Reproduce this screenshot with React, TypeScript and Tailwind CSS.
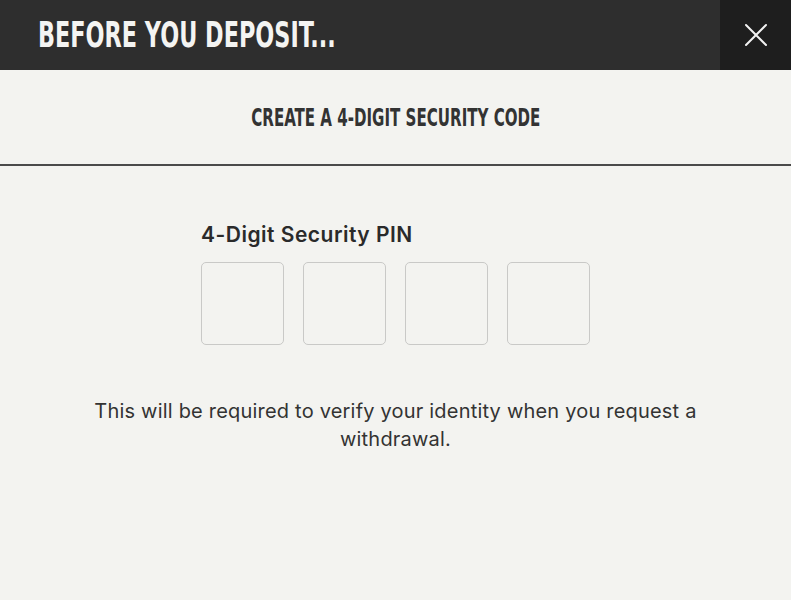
import React, { useState } from 'react'

const condensed = { fontFamily: '"DejaVu Sans Condensed", "Liberation Sans Narrow", "Roboto Condensed", sans-serif' }

export default function App() {
  const [pin, setPin] = useState(['', '', '', ''])

  return (
    <div className="w-[791px] h-[600px] bg-[#f3f3f0] flex flex-col overflow-hidden">
      {/* Header */}
      <div className="h-[70px] flex bg-[#2e2e2e] shrink-0">
        <div className="flex-1 flex items-center pl-[38px]">
          <h1
            className="text-[#f4f4f2] text-[35px] font-bold uppercase leading-none scale-x-[0.71] origin-left whitespace-nowrap"
            style={condensed}
          >
            BEFORE YOU DEPOSIT...
          </h1>
        </div>
        <button className="w-[71px] h-full bg-[#1e1e1e] flex items-center justify-center">
          <svg width="24" height="24" viewBox="0 0 24 24" fill="none" stroke="#f2f2f2" strokeWidth="2" strokeLinecap="round">
            <path d="M2 2L22 22M22 2L2 22" />
          </svg>
        </button>
      </div>

      {/* Subheading */}
      <div className="h-[96px] flex items-center justify-center border-b-2 border-[#4a4a4a] shrink-0">
        <h2
          className="text-[#333] text-[25px] font-bold uppercase leading-none scale-x-[0.67] whitespace-nowrap"
          style={condensed}
        >
          CREATE A 4-DIGIT SECURITY CODE
        </h2>
      </div>

      {/* PIN */}
      <div className="flex flex-col items-center pt-[58px]">
        <div className="flex flex-col">
          <label
            className="text-[#2a2a2a] text-[21px] font-semibold leading-none tracking-[0.5px] mb-[17px]"
            style={{ fontFamily: 'Inter, sans-serif' }}
          >
            4-Digit Security PIN
          </label>
          <div className="flex gap-[19px]">
            {pin.map((v, i) => (
              <input
                key={i}
                value={v}
                maxLength={1}
                onChange={(e) => {
                  const next = [...pin]
                  next[i] = e.target.value
                  setPin(next)
                }}
                className="w-[83px] h-[83px] rounded-[5px] border-[1.5px] border-[#c9c9c7] bg-transparent text-center text-[28px] outline-none"
              />
            ))}
          </div>
        </div>

        <p
          className="mt-[52px] w-[640px] text-center text-[#333] text-[20px] leading-[28px] tracking-[0.2px]"
          style={{ fontFamily: 'Inter, sans-serif' }}
        >
          This will be required to verify your identity when you request a withdrawal.
        </p>
      </div>
    </div>
  )
}
